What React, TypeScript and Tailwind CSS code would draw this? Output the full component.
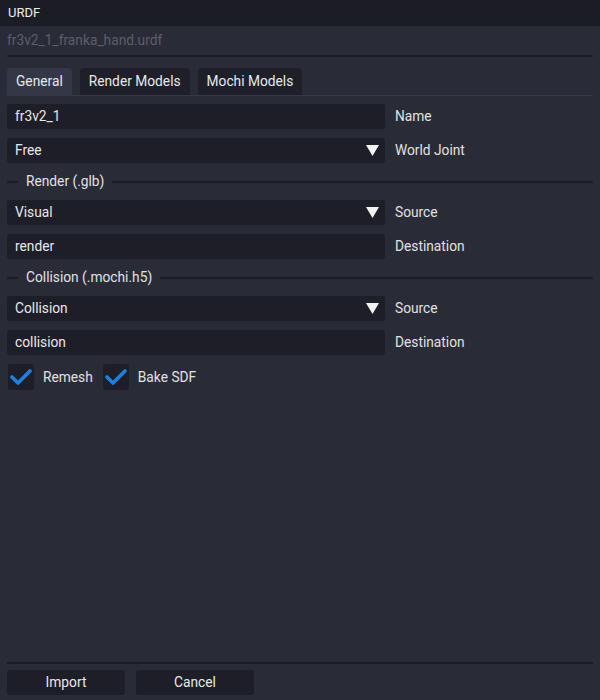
import React from "react";

const Caret = () => (
  <svg width="13" height="11" viewBox="0 0 13 11" className="shrink-0">
    <polygon points="0,0 13,0 6.5,11" fill="#f2f2f2" />
  </svg>
);

const Field = ({ value, label }: { value: string; label: string }) => (
  <div className="flex items-center h-[25px]">
    <div className="w-[378px] h-full bg-[#1d1e27] rounded-[3px] flex items-center px-[8px] text-[#e8e8ea]">
      {value}
    </div>
    <span className="ml-[10px] text-[#e1e1e4]">{label}</span>
  </div>
);

const Combo = ({ value, label }: { value: string; label: string }) => (
  <div className="flex items-center h-[25px]">
    <div className="w-[378px] h-full bg-[#1d1e27] rounded-[3px] flex items-center justify-between pl-[8px] pr-[6px] text-[#e8e8ea]">
      <span>{value}</span>
      <Caret />
    </div>
    <span className="ml-[10px] text-[#e1e1e4]">{label}</span>
  </div>
);

const Section = ({ title }: { title: string }) => (
  <div className="flex items-center h-[19px]">
    <div className="w-[11px] h-[2px] bg-[#1b1c24]" />
    <span className="mx-[8px] text-[#e1e1e4]">{title}</span>
    <div className="flex-1 h-[2px] bg-[#1b1c24]" />
  </div>
);

const Check = ({ label }: { label: string }) => (
  <div className="flex items-center">
    <div className="w-[26px] h-[26px] bg-[#1d1e27] rounded-[3px] flex items-center justify-center">
      <svg width="22" height="18" viewBox="0 0 22 18">
        <polyline points="2,9 8,15 20,3" fill="none" stroke="#1f7fe0" strokeWidth="3.6" strokeLinecap="round" strokeLinejoin="round" />
      </svg>
    </div>
    <span className="ml-[9px] text-[#e1e1e4]">{label}</span>
  </div>
);

const tabs = ["General", "Render Models", "Mochi Models"];

export default function App() {
  return (
    <div className="w-[600px] h-[700px] flex flex-col bg-[#292b37] text-[13.75px] font-['Roboto',sans-serif]">
      <div className="h-[26px] bg-[#1b1c24] flex items-center px-[8px] text-[#eeeeef] text-[13px]">URDF</div>
      <div className="px-[7px] pr-[7px]">
        <div className="h-[29px] flex items-center text-[#5c5f6c]">fr3v2_1_franka_hand.urdf</div>
        <div className="h-[2px] bg-[#1b1c24]" />
      </div>
      <div className="mt-[11px] flex gap-[8px] px-[7px]">
        {tabs.map((t, i) => (
          <div
            key={t}
            className={
              i === 0
                ? "h-[27px] px-[9px] flex items-center rounded-t-[4px] bg-[#343746] text-[#e8e8ea]"
                : "h-[27px] px-[9px] flex items-center rounded-t-[4px] bg-[#1e1f28] text-[#e8e8ea]"
            }
          >
            {t}
          </div>
        ))}
      </div>
      <div className="mx-[7px] h-[1px] bg-[#363947]" />
      <div className="flex flex-col gap-[9px] px-[7px] pt-[8px]">
        <Field value="fr3v2_1" label="Name" />
        <Combo value="Free" label="World Joint" />
        <Section title="Render (.glb)" />
        <Combo value="Visual" label="Source" />
        <Field value="render" label="Destination" />
        <Section title="Collision (.mochi.h5)" />
        <Combo value="Collision" label="Source" />
        <Field value="collision" label="Destination" />
        <div className="flex items-center gap-[10px] pl-[1px]">
          <Check label="Remesh" />
          <Check label="Bake SDF" />
        </div>
      </div>
      <div className="flex-1" />
      <div className="mx-[7px] h-[2px] bg-[#1b1c24]" />
      <div className="flex gap-[11px] px-[7px] pt-[6px] pb-[5px]">
        <button className="w-[118px] h-[25px] bg-[#1d1e27] rounded-[3px] text-[#e8e8ea]">Import</button>
        <button className="w-[118px] h-[25px] bg-[#1d1e27] rounded-[3px] text-[#e8e8ea]">Cancel</button>
      </div>
    </div>
  );
}
